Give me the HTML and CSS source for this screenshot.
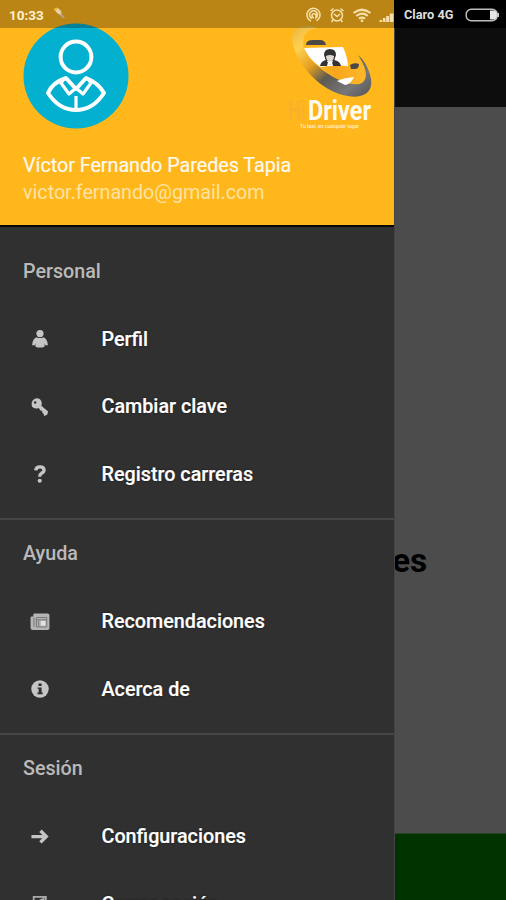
FILE: index.html
```html
<!DOCTYPE html>
<html lang="es">
<head>
<meta charset="utf-8">
<title>HiDriver</title>
<link rel="stylesheet" href="styles.css">
</head>
<body>
<div class="screen">
  <aside class="drawer">
    <header class="profile">
      <div class="profile-top">
        <svg class="avatar" viewBox="0 0 106 106" fill="none" stroke="#fff" stroke-width="4" stroke-linejoin="round">
          <circle cx="53" cy="53" r="52.5" fill="#03b0cf" stroke="none"/>
          <circle cx="53" cy="34" r="15.4"/>
          <path d="M43 55C34 58 28 63 25 70Q36 87 53 87Q70 87 81 70C77 63 71 58 63 55L53 66Z"/>
          <path d="M41 56L38 60L46 71L53 65L60 71L68 60L65 56M53 73V86" stroke-width="3.2"/>
        </svg>
        <svg class="logo" viewBox="0 0 110 110">
          <defs>
            <linearGradient id="swoosh" x1="0" y1="0" x2="1" y2="1">
              <stop offset="0" stop-color="#e8b53c"/><stop offset=".2" stop-color="#ffd052"/>
              <stop offset=".4" stop-color="#e6a021"/><stop offset=".58" stop-color="#5d5a50"/>
              <stop offset=".8" stop-color="#77777a"/><stop offset="1" stop-color="#555"/>
            </linearGradient>
            <linearGradient id="cab" x1="0" y1="0" x2="1" y2="0">
              <stop offset="0" stop-color="#ffc62e"/><stop offset=".5" stop-color="#f7a51d"/><stop offset="1" stop-color="#ffb82a"/>
            </linearGradient>
          </defs>
          <path d="M39 6C24 1 13 5 12 15C12 37 39 70 68 74C85 77 93 69 91 57C89 46 84 38 78 33C86 45 89 56 82 61C67 68 29 43 24 26C21 15 26 6 39 6Z" fill="url(#swoosh)"/>
          <path d="M25 26C35 44 55 61 78 62C87 60 87 48 80 38L68 46L48 40Z" fill="url(#cab)"/>
          <path d="M24 26L63 25Q67 33 68 44Q53 42 42 45L39 44Q29 37 24 26Z" fill="#fff"/>
          <path d="M26 23Q26 18 33 18H40Q45 18 46 23Z" fill="#4a4946"/>
          <path d="M70 43Q74 40 79 42Q79 47 75 47H71Z" fill="#4a4946"/>
          <path d="M57 59Q63 56 74 55Q71 62 65 63Z" fill="#fff"/>
          <path d="M44 33Q44 27 50 27Q56 27 56 33L54 39H46Z" fill="#333"/>
          <path d="M46 34Q50 32 54 34Q54 39 50 40Q46 39 46 34Z" fill="#ded7cf"/>
          <path d="M40 44Q41 39 46 38L50 43L54 38Q60 39 61 44Z" fill="#333"/>
          <path d="M48 40L50 43L52 40L53 44H47Z" fill="#fff"/>
          <text class="logo-name" y="98"><tspan x="8" fill="#fbb02c" textLength="17" lengthAdjust="spacingAndGlyphs">Hi</tspan></text>
          <text class="logo-name" x="28" y="98" textLength="63" lengthAdjust="spacingAndGlyphs">Driver</text>
          <text class="logo-tag" x="20" y="105.500" textLength="59" lengthAdjust="spacingAndGlyphs">Tu taxi, en cualquier lugar</text>
        </svg>
      </div>
      <div class="name">Víctor Fernando Paredes Tapia</div>
      <div class="email">victor.fernando@gmail.com</div>
    </header>
    <nav class="menu">
      <section class="group">
        <h2>Personal</h2>
        <a class="item"><svg class="icon" viewBox="0 0 20 20"><circle cx="10" cy="4" r="4"/><path d="M6 8Q10 10 14 8Q18.500 10 18.800 17H15.500L15 14V18.500Q10 20.500 5 18.500V14L4.500 17H1.200Q1.500 10 6 8Z"/></svg><span>Perfil</span></a>
        <a class="item"><svg class="icon" viewBox="0 0 20 20"><path fill-rule="evenodd" d="M2 2.500Q6-1.500 10 1.500Q13 4.500 11.500 8.500L19 15L18 18.500L14.500 20L14 17.500L12.500 16.500V14.500L10.500 14L8.500 11Q4 13 1 9.500Q-.5 6 2 2.500ZM3.200 5A1.400 1.400 0 1 0 6 5A1.400 1.400 0 1 0 3.200 5Z"/></svg><span>Cambiar clave</span></a>
        <a class="item"><svg class="icon" viewBox="0 0 20 20"><path d="M5.300 6Q5.500 2 10 2Q14.500 2 14.500 5.600Q14.500 8 11.500 9.300Q9.700 10.200 9.700 13" fill="none" stroke="#c5c5c5" stroke-width="3.700"/><circle cx="9.700" cy="17.500" r="2.300"/></svg><span>Registro carreras</span></a>
      </section>
      <section class="group">
        <h2>Ayuda</h2>
        <a class="item"><svg class="icon" viewBox="0 0 20 20"><path d="M4 .5H18.500Q20.500 .5 20.500 2.500V17Q20.500 19 18.500 19H2Q-.5 19-.5 16.500V5Q-.5 4 .5 4H2.500V2Q2.500 .5 4 .5Z" fill="#b5b5b5"/><path d="M3.300 5V15.500M6 5H17.500V15.500H6ZM6 7.500H17M8.500 8.500V15" fill="none" stroke="#777" stroke-width="1.100"/><path d="M11 9H16V14H11Z" fill="#e2e2e2"/></svg><span>Recomendaciones</span></a>
        <a class="item"><svg class="icon" viewBox="0 0 20 20"><circle cx="10" cy="10" r="9.700"/><path d="M8.300 3.800H11.800V6.600H8.300ZM7.200 8.200H11.800V14H13V15.700H7.200V14H8.500V9.800H7.200Z" fill="#303030"/></svg><span>Acerca de</span></a>
      </section>
      <section class="group">
        <h2>Sesión</h2>
        <a class="item"><svg class="icon" viewBox="0 0 20 20" ><path d="M.5 9.500H17M10.500 3L17 9.500L10.500 16" fill="none" stroke="#c5c5c5" stroke-width="3.700"/></svg><span>Configuraciones</span></a>
        <a class="item"><svg class="icon" viewBox="0 0 20 20"><path d="M3 2H16.500V18H3ZM8 7L14 4V17L8 19Z" fill="none" stroke="#aaa" stroke-width="2"/></svg><span>Cerrar sesión</span></a>
      </section>
    </nav>
  </aside>
  <main class="page">
    <div class="toolbar"></div>
    <div class="content"><span>es</span></div>
    <div class="action"></div>
  </main>
  <div class="status">
    <div class="status-left">
      <span class="time">10:33</span>
      <svg class="note" viewBox="0 0 14 14"><path d="M1 2L5 1L8 4L9 9L4 6Z" fill="#e6d1a0"/><path d="M8 6L12 11L10 11L7 8Z" fill="#b8a4a0"/><path d="M1 3L4 1" stroke="#efb52e" stroke-width="2"/></svg>
      <svg class="signals" viewBox="0 0 90 18" fill="none" stroke="#f7dfaa" stroke-width="1.500">
        <path d="M6 15A6.600 6.600 0 1 1 11.500 14.800M7 12.500A4 4 0 1 1 11 12V7.500M11 9.500A2 2 0 1 0 9 11.700"/>
        <circle cx="32" cy="9.500" r="5.500"/><path d="M25.500 5L28.500 2.500M38.500 5L35.500 2.500M28 14L26.500 16M36 14L37.500 16M29 8L32 10.500L35 8"/>
        <path d="M48.500 7Q57 .5 65.500 7M51.300 10Q57 5.500 62.700 9.800M54 12.700Q57 10.500 60 12.700" stroke-width="2.200"/><circle cx="57" cy="14.800" r="1.400" fill="#f7dfaa" stroke="none"/>
        <path d="M74.500 16V14H77V16ZM77.800 16V12H80.500V16ZM81.200 16V10H84V16ZM84.700 16V7.500H88.500V16Z" fill="#f7dfaa" stroke="none"/>
      </svg>
    </div>
    <div class="status-right">
      <span class="carrier">Claro 4G</span>
      <svg class="battery" viewBox="0 0 36 14"><rect x="1.200" y="1.200" width="31" height="11.600" rx="5" fill="none" stroke="#bdbdbd" stroke-width="1.500"/><path d="M25 2.500H29Q32 3 32 7T29 11.500H25Z" fill="#e5e5e5"/><path d="M32.500 5H34V9H32.500Z" fill="#ccc"/></svg>
    </div>
  </div>
</div>
</body>
</html>
```
FILE: styles.css
```css
* { box-sizing: border-box; }
body { margin: 0; font-family: Roboto, "Liberation Sans", sans-serif; }
.screen { position: relative; display: flex; width: 506px; height: 900px; overflow: hidden; background: #303030; }
.drawer { flex: 0 0 394px; height: 900px; overflow: hidden; background: #303030; }
.profile { height: 227px; padding: 23px 12px 0 23px; background: #ffb71c; border-bottom: 2px solid #08090d; }
.profile-top { display: flex; justify-content: space-between; height: 127px; }
.avatar { width: 106px; height: 106px; }
.logo { width: 110px; height: 110px; margin-right: -8px; margin-top: -1px; }
.logo-name { font-size: 28px; font-weight: 700; fill: #fffaf0; }
.logo-tag { font-size: 5.5px; font-weight: 500; fill: #fff0ca; }
.name, .email { line-height: 27px; white-space: nowrap; }
.name { margin-top: 2px; color: #fffaf0; font-size: 19.7px; -webkit-text-stroke: .2px #fffaf0; }
.email { font-size: 19.7px; color: #ffe3a2; }
.menu { padding-top: 10px; }
.group { padding-bottom: 10.5px; border-bottom: 2px solid #464646; }
.group h2 { display: flex; align-items: center; height: 67.5px; margin: 0; padding: 1px 0 0 23px; font-size: 19.7px; font-weight: 500; color: #bababa; }
.item { display: flex; align-items: center; height: 67.5px; padding: 2px 0 0 31px; font-size: 19.75px; font-weight: 500; color: #fff; text-shadow: 0 0 2px #111; -webkit-text-stroke: .2px #fff; }
.icon { width: 18px; height: 18px; margin-right: 52.5px; fill: #c5c5c5; overflow: visible; }
.page { display: flex; flex: 1; min-width: 0; flex-direction: column; background: #4c4c4c; border-left: 1px solid #444; }
.toolbar { height: 107px; background: #0d0d0d; }
.content { display: flex; flex: 1; align-items: center; overflow: hidden; padding-top: 181px; font-size: 33.5px; font-weight: 700; color: #000; }
.content span { margin-left: -3px; }
.action { height: 67px; background: #003300; border-top: 1px solid #244524; }
.status { position: absolute; inset: 0 0 auto; display: flex; height: 28px; font-size: 12.8px; font-weight: 700; }
.status-left { display: flex; flex: 0 0 394px; align-items: center; padding-left: 9px; background: rgba(0, 0, 0, .27); color: #fff0d0; }
.time { font-size: 13.5px; padding-top: 1px; width: 44px; }
.note { width: 14px; height: 14px; }
.signals { width: 90px; height: 18px; margin: 2px -1px 0 auto; }
.status-right { display: flex; flex: 1; align-items: center; justify-content: space-between; padding: 1px 5px 0 10px; background: #000; color: #ddd; white-space: nowrap; }
.battery { width: 36px; height: 14px; }
```
